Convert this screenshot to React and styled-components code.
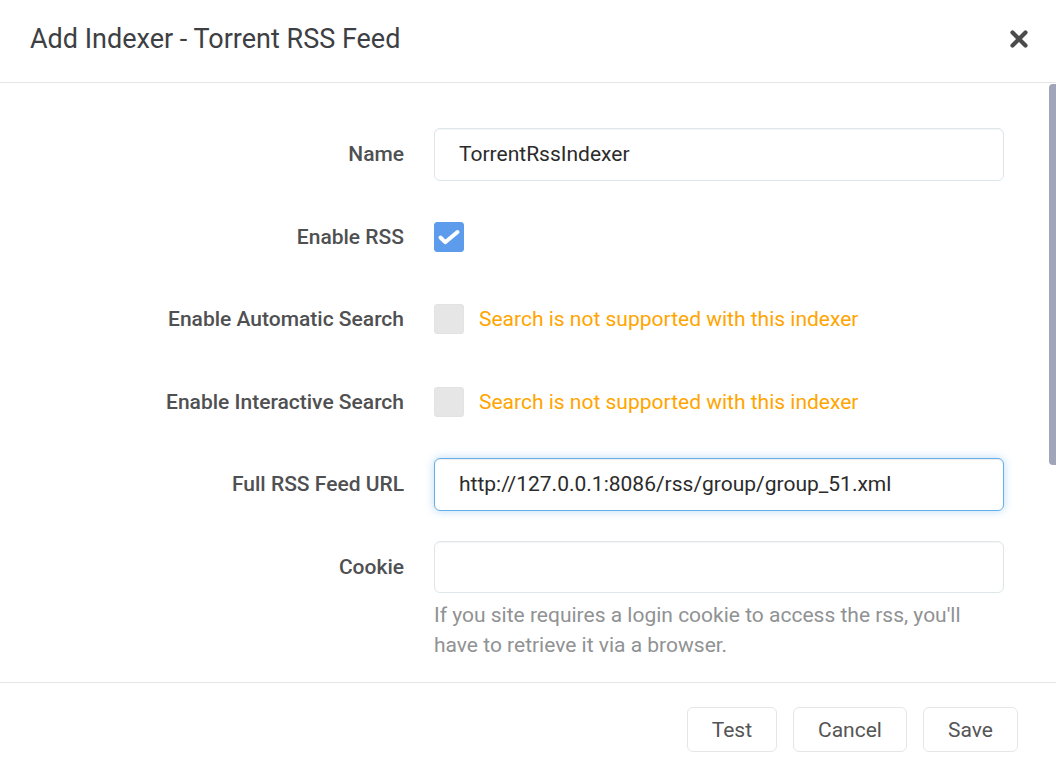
import React from "react";
import styled, { createGlobalStyle } from "styled-components";

const Global = createGlobalStyle`
  html, body { margin: 0; padding: 0; background: #fff; }
  body { font-family: Roboto, "Open Sans", "Liberation Sans", sans-serif; }
  * { box-sizing: border-box; }
`;

const Modal = styled.div`
  width: 1056px;
  height: 772px;
  display: flex;
  flex-direction: column;
  background: #fff;
  color: #515253;
`;

const Header = styled.div`
  flex: 0 0 auto;
  height: 83px;
  display: flex;
  align-items: center;
  justify-content: space-between;
  padding: 0 24px 0 30px;
  border-bottom: 1px solid #e5e5e5;
`;

const Title = styled.h1`
  margin: 0;
  font-size: 27px;
  font-weight: 400;
  color: #3d3f44;
  padding-bottom: 4px;
`;

const CloseButton = styled.button`
  border: 0;
  background: transparent;
  padding: 0;
  width: 26px;
  height: 26px;
  display: flex;
  align-items: center;
  justify-content: center;
  color: #4b4b4b;
  cursor: pointer;
  margin-bottom: 4px;
`;

const BodyWrap = styled.div`
  position: relative;
  flex: 1 1 auto;
  overflow: hidden;
`;

const Body = styled.div`
  padding: 45px 30px 30px 29px;
`;

const ScrollThumb = styled.div`
  position: absolute;
  right: 0;
  top: 1px;
  width: 7px;
  height: 381px;
  border-radius: 4px 0 0 4px;
  background: #a1a5ba;
`;

const FormGroup = styled.div`
  display: flex;
  align-items: flex-start;
  margin-bottom: 30px;
`;

const Label = styled.label`
  flex: 0 0 375px;
  margin-right: 30px;
  text-align: right;
  line-height: 52.5px;
  font-size: 21px;
  font-weight: 500;
  color: #4f5052;
`;

const InputColumn = styled.div`
  width: 570px;
  display: flex;
  flex-direction: column;
`;

const TextInput = styled.input`
  width: 100%;
  height: 52.5px;
  padding: 0 24px;
  font-family: inherit;
  font-size: 21px;
  color: #2b2b2b;
  background: #fff;
  border: 1px solid ${(p) => (p.$focused ? "#66afe9" : "#dde6e9")};
  border-radius: 6px;
  outline: none;
  box-shadow: ${(p) =>
    p.$focused
      ? "inset 0 1px 1px rgba(0,0,0,.075), 0 0 10px rgba(102,175,233,.45)"
      : "inset 0 1px 1px rgba(0,0,0,.04)"};
`;

const CheckRow = styled.div`
  height: 52.5px;
  display: flex;
  align-items: center;
  gap: 15px;
`;

const CheckBox = styled.span`
  flex: 0 0 30px;
  width: 30px;
  height: 30px;
  border-radius: 3px;
  display: flex;
  align-items: center;
  justify-content: center;
  background: ${(p) => (p.$checked ? "#5d9cec" : "#e6e6e6")};
  border: 1px solid ${(p) => (p.$checked ? "#5d9cec" : "#e3e3e3")};
`;

const Warning = styled.span`
  font-size: 21px;
  color: #ffa500;
`;

const HelpText = styled.div`
  margin-top: 7px;
  font-size: 21px;
  line-height: 30px;
  color: #909293;
`;

const Footer = styled.div`
  flex: 0 0 auto;
  height: 90px;
  border-top: 1px solid #e5e5e5;
  display: flex;
  align-items: center;
  justify-content: flex-end;
  gap: 16px;
  padding: 4px 38px 0 0;
`;

const Button = styled.button`
  height: 45px;
  min-width: ${(p) => p.$w}px;
  padding: 0 24px;
  font-family: inherit;
  font-size: 21px;
  color: #555;
  background: #fff;
  border: 1px solid #e6e6e6;
  border-radius: 6px;
  cursor: pointer;
`;

function Check({ checked }) {
  return (
    <CheckBox $checked={checked}>
      {checked && (
        <svg width="28" height="28" viewBox="1 1 28 28">
          <path
            d="M6.5 15.5 L11.2 20.2 L23.5 10"
            fill="none"
            stroke="#fff"
            strokeWidth="4"
            strokeLinecap="round"
            strokeLinejoin="round"
          />
        </svg>
      )}
    </CheckBox>
  );
}

function CheckField({ label, checked, warning }) {
  return (
    <FormGroup>
      <Label>{label}</Label>
      <InputColumn>
        <CheckRow>
          <Check checked={checked} />
          {warning && <Warning>{warning}</Warning>}
        </CheckRow>
      </InputColumn>
    </FormGroup>
  );
}

function TextField({ label, value, focused, help }) {
  return (
    <FormGroup>
      <Label>{label}</Label>
      <InputColumn>
        <TextInput defaultValue={value} $focused={focused} readOnly />
        {help && <HelpText>{help}</HelpText>}
      </InputColumn>
    </FormGroup>
  );
}

export default function App() {
  const warn = "Search is not supported with this indexer";
  return (
    <>
      <Global />
      <Modal>
        <Header>
          <Title>Add Indexer - Torrent RSS Feed</Title>
          <CloseButton aria-label="Close">
            <svg width="20" height="20" viewBox="0 0 20 20">
              <path
                d="M3.5 3.5 L16.5 16.5 M16.5 3.5 L3.5 16.5"
                stroke="currentColor"
                strokeWidth="4.2"
                strokeLinecap="round"
              />
            </svg>
          </CloseButton>
        </Header>
        <BodyWrap>
          <Body>
            <TextField label="Name" value="TorrentRssIndexer" />
            <CheckField label="Enable RSS" checked />
            <CheckField label="Enable Automatic Search" warning={warn} />
            <CheckField label="Enable Interactive Search" warning={warn} />
            <TextField
              label="Full RSS Feed URL"
              value="http://127.0.0.1:8086/rss/group/group_51.xml"
              focused
            />
            <TextField
              label="Cookie"
              value=""
              help="If you site requires a login cookie to access the rss, you'll have to retrieve it via a browser."
            />
          </Body>
          <ScrollThumb />
        </BodyWrap>
        <Footer>
          <Button $w={90}>Test</Button>
          <Button $w={114}>Cancel</Button>
          <Button $w={95}>Save</Button>
        </Footer>
      </Modal>
    </>
  );
}
